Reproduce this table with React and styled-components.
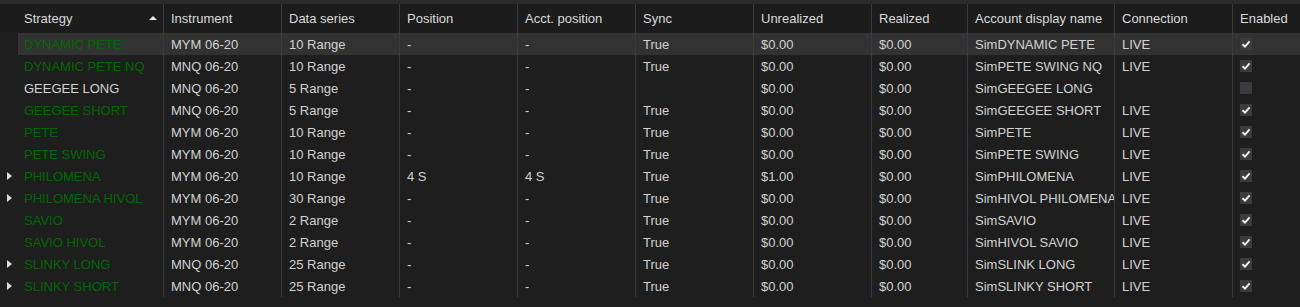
import styled, { createGlobalStyle } from 'styled-components';

const GlobalStyle = createGlobalStyle`
  html, body {
    margin: 0;
    padding: 0;
    background: #1e1e1e;
  }
`;

const COLS = '18px 146px 118px 118px 118px 118px 118px 118px 96px 147px 118px 1fr';

const columns = [
  'Instrument',
  'Data series',
  'Position',
  'Acct. position',
  'Sync',
  'Unrealized',
  'Realized',
  'Account display name',
  'Connection',
  'Enabled',
];

const rows = [
  { name: 'DYNAMIC PETE', green: true, inst: 'MYM 06-20', series: '10 Range', pos: '-', acct: '-', sync: 'True', unr: '$0.00', real: '$0.00', account: 'SimDYNAMIC PETE', conn: 'LIVE', enabled: true, selected: true },
  { name: 'DYNAMIC PETE NQ', green: true, inst: 'MNQ 06-20', series: '10 Range', pos: '-', acct: '-', sync: 'True', unr: '$0.00', real: '$0.00', account: 'SimPETE SWING NQ', conn: 'LIVE', enabled: true },
  { name: 'GEEGEE LONG', green: false, inst: 'MNQ 06-20', series: '5 Range', pos: '-', acct: '-', sync: '', unr: '$0.00', real: '$0.00', account: 'SimGEEGEE LONG', conn: '', enabled: false },
  { name: 'GEEGEE SHORT', green: true, inst: 'MNQ 06-20', series: '5 Range', pos: '-', acct: '-', sync: 'True', unr: '$0.00', real: '$0.00', account: 'SimGEEGEE SHORT', conn: 'LIVE', enabled: true },
  { name: 'PETE', green: true, inst: 'MYM 06-20', series: '10 Range', pos: '-', acct: '-', sync: 'True', unr: '$0.00', real: '$0.00', account: 'SimPETE', conn: 'LIVE', enabled: true },
  { name: 'PETE SWING', green: true, inst: 'MYM 06-20', series: '10 Range', pos: '-', acct: '-', sync: 'True', unr: '$0.00', real: '$0.00', account: 'SimPETE SWING', conn: 'LIVE', enabled: true },
  { name: 'PHILOMENA', green: true, expand: true, inst: 'MYM 06-20', series: '10 Range', pos: '4 S', acct: '4 S', sync: 'True', unr: '$1.00', real: '$0.00', account: 'SimPHILOMENA', conn: 'LIVE', enabled: true },
  { name: 'PHILOMENA HIVOL', green: true, expand: true, inst: 'MYM 06-20', series: '30 Range', pos: '-', acct: '-', sync: 'True', unr: '$0.00', real: '$0.00', account: 'SimHIVOL PHILOMENA', conn: 'LIVE', enabled: true },
  { name: 'SAVIO', green: true, inst: 'MYM 06-20', series: '2 Range', pos: '-', acct: '-', sync: 'True', unr: '$0.00', real: '$0.00', account: 'SimSAVIO', conn: 'LIVE', enabled: true },
  { name: 'SAVIO HIVOL', green: true, inst: 'MYM 06-20', series: '2 Range', pos: '-', acct: '-', sync: 'True', unr: '$0.00', real: '$0.00', account: 'SimHIVOL SAVIO', conn: 'LIVE', enabled: true },
  { name: 'SLINKY LONG', green: true, expand: true, inst: 'MNQ 06-20', series: '25 Range', pos: '-', acct: '-', sync: 'True', unr: '$0.00', real: '$0.00', account: 'SimSLINK LONG', conn: 'LIVE', enabled: true },
  { name: 'SLINKY SHORT', green: true, expand: true, inst: 'MNQ 06-20', series: '25 Range', pos: '-', acct: '-', sync: 'True', unr: '$0.00', real: '$0.00', account: 'SimSLINKY SHORT', conn: 'LIVE', enabled: true },
];

const App = () => {
  return (
    <>
      <GlobalStyle />
      <Grid>
        <TopStrip />
        <HeaderRow>
          <HeaderCell $first>
            Strategy
            <SortArrow />
          </HeaderCell>
          {columns.map((c) => (
            <HeaderCell key={c}>{c}</HeaderCell>
          ))}
        </HeaderRow>
        {rows.map((r) => (
          <Row key={r.name}>
            <Indicator>{r.expand && <ExpandArrow />}</Indicator>
            <Cell $green={r.green} $hl={r.selected}>{r.name}</Cell>
            <Cell $hl={r.selected}>{r.inst}</Cell>
            <Cell $hl={r.selected}>{r.series}</Cell>
            <Cell $hl={r.selected}>{r.pos}</Cell>
            <Cell $hl={r.selected}>{r.acct}</Cell>
            <Cell $hl={r.selected}>{r.sync}</Cell>
            <Cell $hl={r.selected}>{r.unr}</Cell>
            <Cell $hl={r.selected}>{r.real}</Cell>
            <Cell $hl={r.selected}>{r.account}</Cell>
            <Cell $hl={r.selected}>{r.conn}</Cell>
            <Cell $hl={r.selected} $last>
              <CheckBox>
                {r.enabled && (
                  <svg width="10" height="10" viewBox="0 0 10 10">
                    <path d="M1.5 5.2 L4 7.6 L8.6 2.4" fill="none" stroke="#f0f0f0" strokeWidth="1.9" />
                  </svg>
                )}
              </CheckBox>
            </Cell>
          </Row>
        ))}
      </Grid>
    </>
  );
};

const Grid = styled.div`
  width: 1300px;
  height: 307px;
  background: #1e1e1e;
  font-family: 'Liberation Sans', Arial, sans-serif;
  font-size: 13px;
  color: #d2d2d2;
  overflow: hidden;
`;

const TopStrip = styled.div`
  height: 4px;
  background: #2b2b2b;
`;

const HeaderRow = styled.div`
  display: grid;
  grid-template-columns: ${COLS};
  height: 29px;
  background: #1c1c1c;
`;

const HeaderCell = styled.div`
  position: relative;
  display: flex;
  align-items: center;
  grid-column: ${(p) => (p.$first ? '1 / 3' : 'auto')};
  padding-left: ${(p) => (p.$first ? '24px' : '7px')};
  border-right: 1px solid #3a3a3a;
  color: #dadada;
  white-space: nowrap;
  overflow: hidden;
  &:last-child {
    border-right: none;
  }
`;

const SortArrow = styled.span`
  position: absolute;
  right: 6px;
  top: 12px;
  width: 0;
  height: 0;
  border-left: 4px solid transparent;
  border-right: 4px solid transparent;
  border-bottom: 4px solid #e8e8e8;
`;

const Row = styled.div`
  display: grid;
  grid-template-columns: ${COLS};
  height: 22px;
`;

const Indicator = styled.div`
  display: flex;
  align-items: center;
  padding-left: 7px;
`;

const ExpandArrow = styled.span`
  width: 0;
  height: 0;
  border-top: 4px solid transparent;
  border-bottom: 4px solid transparent;
  border-left: 5px solid #dcdcdc;
`;

const Cell = styled.div`
  display: flex;
  align-items: center;
  padding-left: ${(p) => (p.$green !== undefined ? '6px' : '7px')};
  background: ${(p) => (p.$hl ? '#323232' : 'transparent')};
  border-right: ${(p) => (p.$last ? 'none' : '1px solid #3a3a3a')};
  color: ${(p) => (p.$green ? '#006a00' : '#d2d2d2')};
  white-space: nowrap;
  overflow: hidden;
`;

const CheckBox = styled.span`
  display: flex;
  align-items: center;
  justify-content: center;
  width: 12px;
  height: 12px;
  background: #3c3c40;
`;

export default App;
